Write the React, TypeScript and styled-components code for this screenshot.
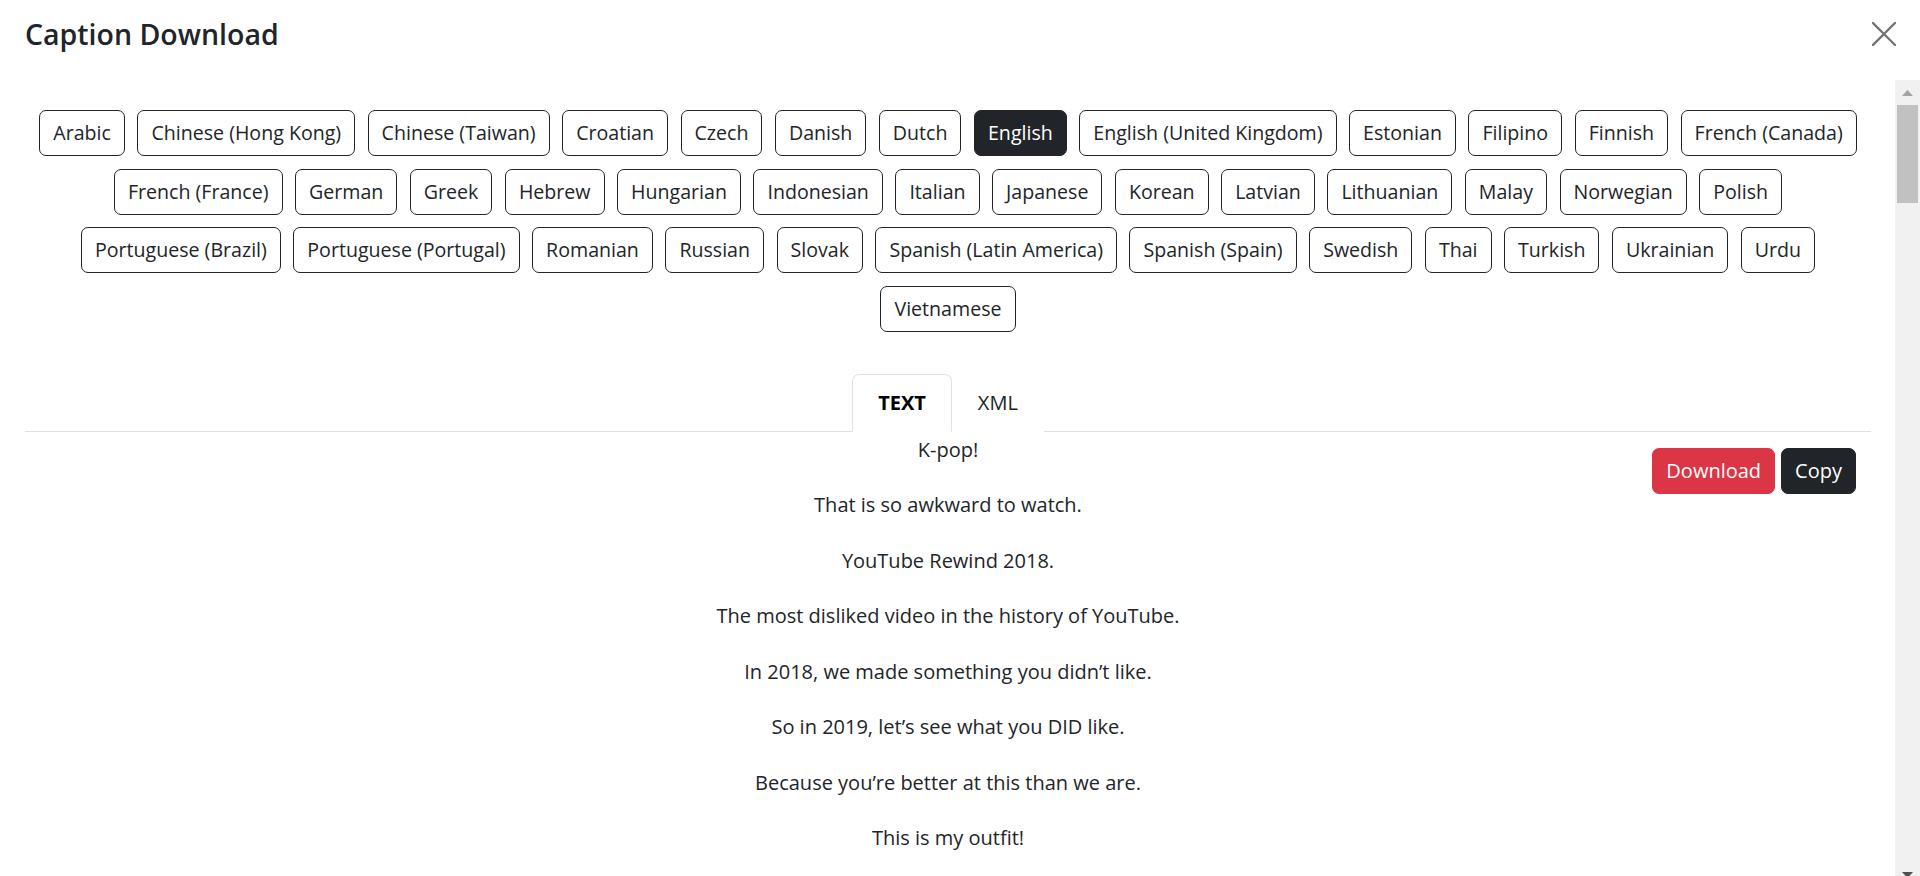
import React from 'react';
import styled, { createGlobalStyle } from 'styled-components';

const GlobalStyle = createGlobalStyle`
  html, body {
    margin: 0;
    height: 100%;
    overflow: hidden;
    background: #fff;
  }

  body {
    font-family: 'Open Sans', 'Noto Sans', sans-serif;
    color: #212529;
  }
`;

const Modal = styled.div`
  display: flex;
  flex-direction: column;
  height: 100vh;
  overflow: hidden;
`;

const Header = styled.header`
  flex: 0 0 80px;
  box-sizing: border-box;
  display: flex;
  align-items: flex-start;
  justify-content: space-between;
  padding: 17px 24px 0 25px;
`;

const Title = styled.h5`
  margin: 0;
  font-size: 28.5px;
  font-weight: 600;
  line-height: 34px;
  color: #212529;
`;

const CloseButton = styled.button`
  display: flex;
  margin-top: 5px;
  padding: 0;
  border: 0;
  background: transparent;
  cursor: pointer;
`;

const BodyFrame = styled.div`
  flex: none;
  display: flex;
  height: 807px;
`;

const Body = styled.div`
  flex: 1 1 auto;
  min-width: 0;
  box-sizing: border-box;
  overflow-y: auto;
  padding: 30px 24px 24px 25px;
  scrollbar-width: none;

  &::-webkit-scrollbar {
    display: none;
  }
`;

const Scrollbar = styled.div`
  flex: 0 0 25px;
  display: flex;
  flex-direction: column;
  background: #f1f1f1;
`;

const ScrollArrow = styled.div`
  flex: 0 0 25px;
  display: flex;
  align-items: center;
  justify-content: center;
`;

const ScrollTrack = styled.div`
  flex: 1 1 auto;
  padding: 0 2px;
`;

const ScrollThumb = styled.div`
  height: 98px;
  background: #c1c1c1;
`;

const LangGrid = styled.div`
  display: flex;
  flex-direction: column;
  gap: 12.5px;
`;

const LangRow = styled.div`
  display: flex;
  justify-content: center;
  gap: 12.5px;
`;

const LangButton = styled.button<{ $active?: boolean }>`
  font-family: inherit;
  font-size: 19.6px;
  line-height: 30px;
  padding: 7px 13px;
  border: 1px solid #212529;
  border-radius: 7px;
  background: ${(p) => (p.$active ? '#212529' : '#fff')};
  color: ${(p) => (p.$active ? '#fff' : '#212529')};
  white-space: nowrap;
  cursor: pointer;
`;

const TabNav = styled.div`
  display: flex;
  justify-content: center;
  margin-top: 42px;
  border-bottom: 1px solid #dee2e6;
`;

const Tab = styled.button<{ $active?: boolean }>`
  margin-bottom: -1px;
  padding: 13px 25px;
  font-family: inherit;
  font-size: 20px;
  line-height: 30px;
  font-weight: ${(p) => (p.$active ? 700 : 400)};
  color: ${(p) => (p.$active ? '#000' : '#212529')};
  background: #fff;
  border: 1px solid;
  border-color: ${(p) => (p.$active ? '#dee2e6 #dee2e6 #fff' : 'transparent')};
  border-radius: 7px 7px 0 0;
  cursor: pointer;
`;

const Pane = styled.div`
  position: relative;
  min-height: 5856px;
  padding-top: 3px;
  text-align: center;
`;

const Line = styled.p`
  margin: 0 0 25.5px;
  font-size: 20px;
  line-height: 30px;
  color: #212529;
`;

const Actions = styled.div`
  position: absolute;
  top: 16px;
  right: 15px;
  display: flex;
  gap: 6px;
`;

const ActionButton = styled.button<{ $variant: 'danger' | 'dark' }>`
  font-family: inherit;
  font-size: 20px;
  line-height: 30px;
  padding: 7px 13px;
  color: #fff;
  background: ${(p) => (p.$variant === 'danger' ? '#dc3545' : '#212529')};
  border: 1px solid ${(p) => (p.$variant === 'danger' ? '#dc3545' : '#212529')};
  border-radius: 7px;
  cursor: pointer;
`;

const languageRows = [
  [
    'Arabic',
    'Chinese (Hong Kong)',
    'Chinese (Taiwan)',
    'Croatian',
    'Czech',
    'Danish',
    'Dutch',
    'English',
    'English (United Kingdom)',
    'Estonian',
    'Filipino',
    'Finnish',
    'French (Canada)',
  ],
  [
    'French (France)',
    'German',
    'Greek',
    'Hebrew',
    'Hungarian',
    'Indonesian',
    'Italian',
    'Japanese',
    'Korean',
    'Latvian',
    'Lithuanian',
    'Malay',
    'Norwegian',
    'Polish',
  ],
  [
    'Portuguese (Brazil)',
    'Portuguese (Portugal)',
    'Romanian',
    'Russian',
    'Slovak',
    'Spanish (Latin America)',
    'Spanish (Spain)',
    'Swedish',
    'Thai',
    'Turkish',
    'Ukrainian',
    'Urdu',
  ],
  ['Vietnamese'],
];

const captions = [
  'K-pop!',
  'That is so awkward to watch.',
  'YouTube Rewind 2018.',
  'The most disliked video in the history of YouTube.',
  'In 2018, we made something you didn’t like.',
  'So in 2019, let’s see what you DID like.',
  'Because you’re better at this than we are.',
  'This is my outfit!',
];

const CloseIcon = () => (
  <svg width="24" height="24" viewBox="0 0 24 24" fill="none">
    <path d="M1 1 L23 23 M23 1 L1 23" stroke="#737373" strokeWidth="2.3" strokeLinecap="square" />
  </svg>
);

const Arrow = ({ dir, color }: { dir: 'up' | 'down'; color: string }) => (
  <svg width="11" height="6" viewBox="0 0 11 6">
    <polygon points={dir === 'up' ? '0,6 5.5,0 11,6' : '0,0 5.5,6 11,0'} fill={color} />
  </svg>
);

export default function App() {
  const [language, setLanguage] = React.useState('English');
  const [tab, setTab] = React.useState<'text' | 'xml'>('text');

  return (
    <>
      <GlobalStyle />
      <Modal>
        <Header>
          <Title>Caption Download</Title>
          <CloseButton aria-label="Close">
            <CloseIcon />
          </CloseButton>
        </Header>

        <BodyFrame>
          <Body>
            <LangGrid>
              {languageRows.map((row, i) => (
                <LangRow key={i}>
                  {row.map((name) => (
                    <LangButton
                      key={name}
                      $active={name === language}
                      onClick={() => setLanguage(name)}
                    >
                      {name}
                    </LangButton>
                  ))}
                </LangRow>
              ))}
            </LangGrid>

            <TabNav>
              <Tab $active={tab === 'text'} onClick={() => setTab('text')}>
                TEXT
              </Tab>
              <Tab $active={tab === 'xml'} onClick={() => setTab('xml')}>
                XML
              </Tab>
            </TabNav>

            <Pane>
              {captions.map((line, i) => (
                <Line key={i}>{line}</Line>
              ))}
              <Actions>
                <ActionButton $variant="danger">Download</ActionButton>
                <ActionButton $variant="dark">Copy</ActionButton>
              </Actions>
            </Pane>
          </Body>

          <Scrollbar aria-hidden="true">
            <ScrollArrow>
              <Arrow dir="up" color="#a3a3a3" />
            </ScrollArrow>
            <ScrollTrack>
              <ScrollThumb />
            </ScrollTrack>
            <ScrollArrow>
              <Arrow dir="down" color="#505050" />
            </ScrollArrow>
          </Scrollbar>
        </BodyFrame>
      </Modal>
    </>
  );
}
